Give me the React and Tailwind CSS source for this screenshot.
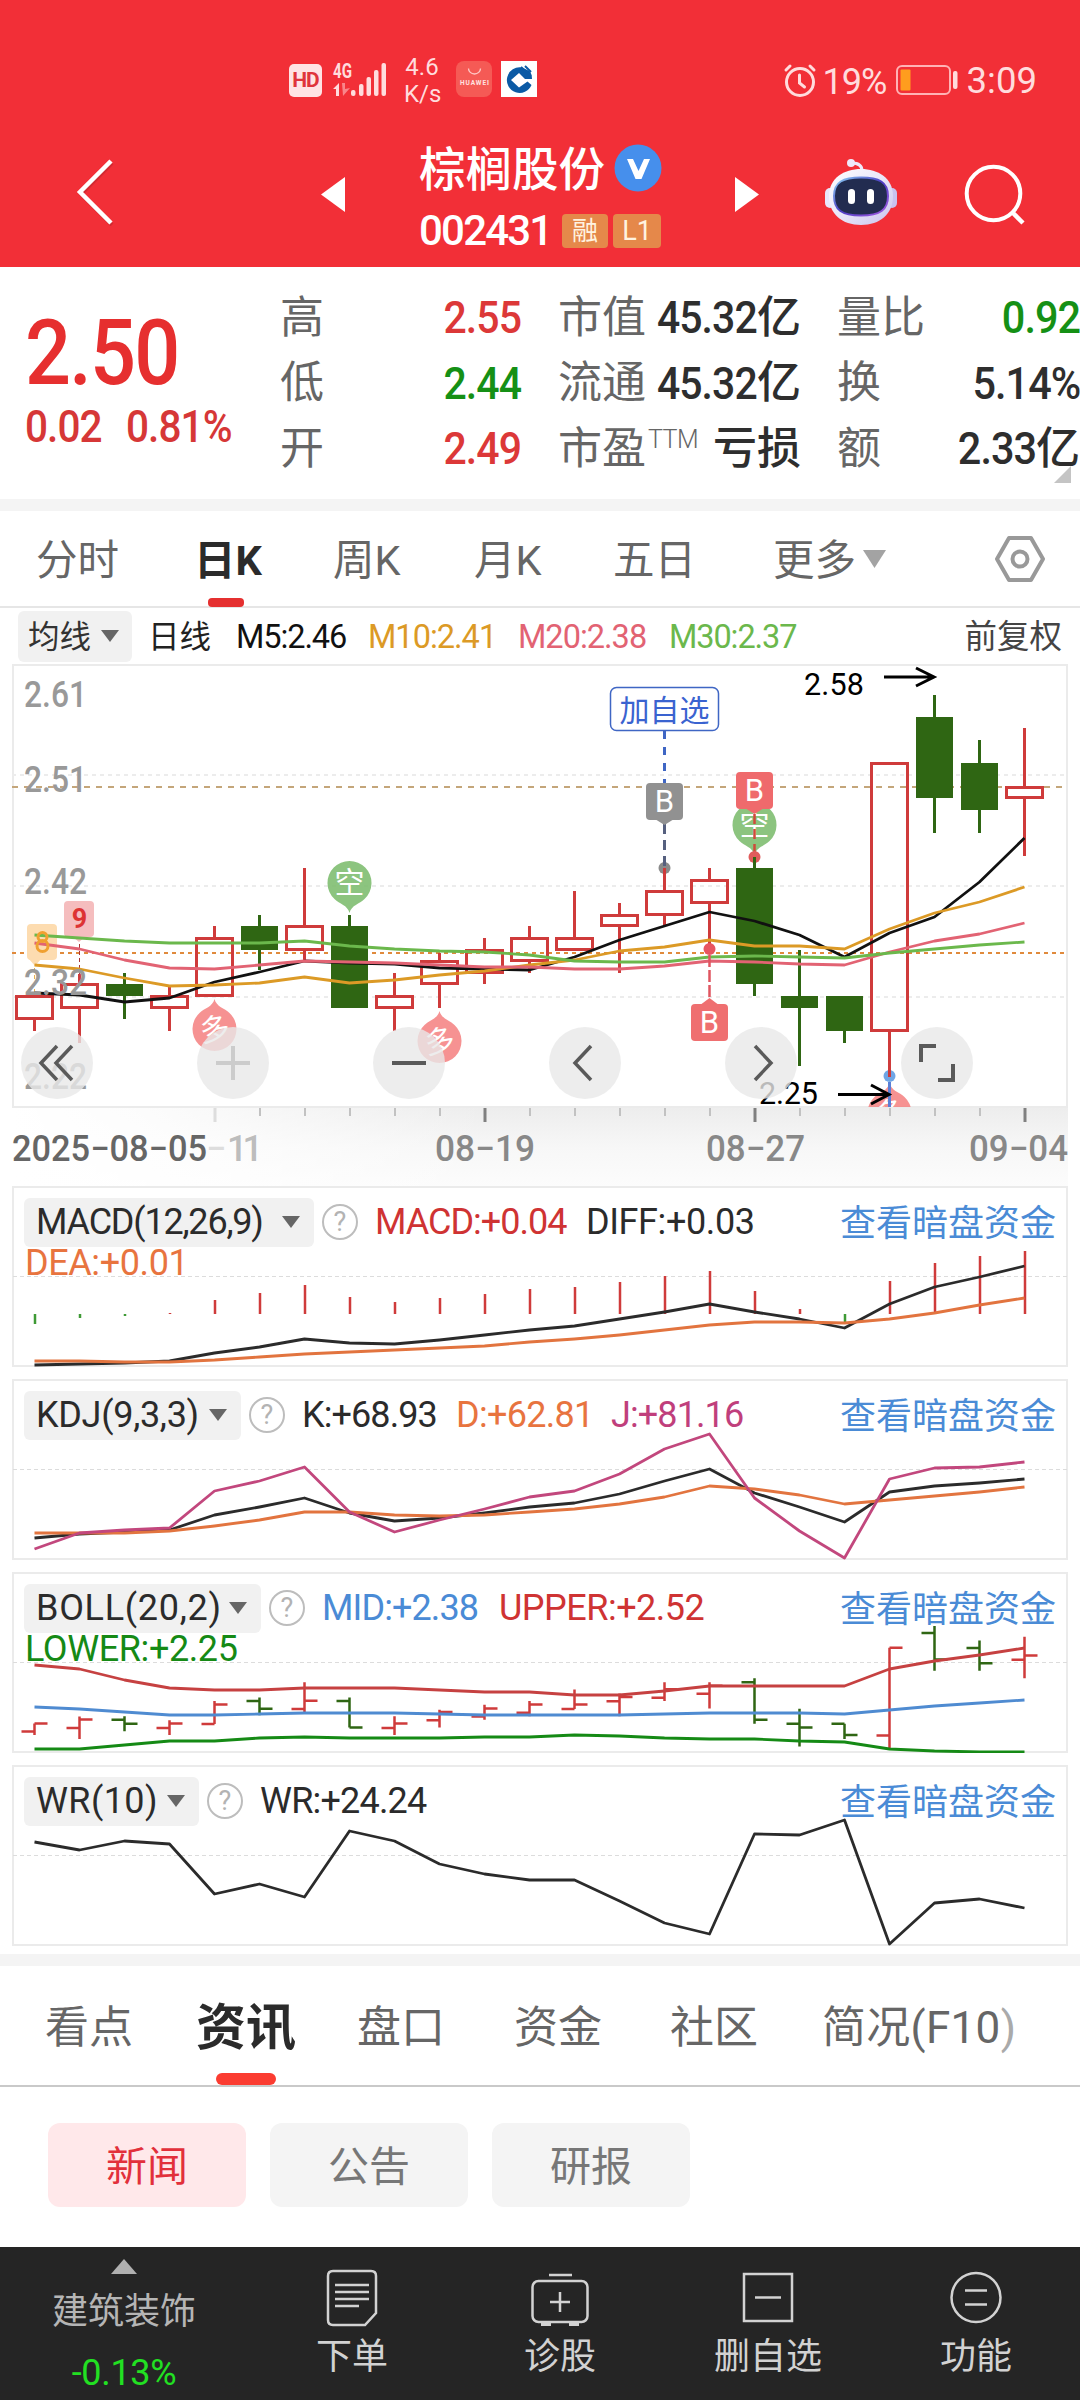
import React from 'react';

const GREEN = '#2f6613';
const RED = '#cf3b3b';

// y positions on the price canvas: type, high, body top, body bottom, low
const candles = [
  ['up', 995, 995, 1020, 1031],
  ['up', 974, 983, 1009, 1043],
  ['down', 973, 984, 996, 1019],
  ['up', 985, 995, 1009, 1031],
  ['up', 926, 937, 997, 997],
  ['down', 915, 926, 950, 970],
  ['up', 868, 925, 951, 960],
  ['down', 915, 926, 1008, 1008],
  ['up', 973, 995, 1009, 1031],
  ['up', 953, 960, 985, 1008],
  ['up', 938, 949, 974, 984],
  ['up', 926, 937, 962, 973],
  ['up', 891, 937, 951, 951],
  ['up', 903, 914, 927, 973],
  ['up', 868, 890, 916, 926],
  ['up', 868, 879, 904, 949],
  ['down', 856, 868, 984, 996],
  ['down', 950, 996, 1008, 1066],
  ['down', 996, 996, 1031, 1043],
  ['up', 762, 762, 1032, 1077],
  ['down', 695, 717, 798, 833],
  ['down', 740, 763, 810, 833],
  ['up', 728, 786, 799, 856],
];

const averages = [
  { color: '#111', ys: [993, 995, 1002, 998, 982, 972, 961, 963, 964, 968, 969, 970, 957, 940, 926, 912, 921, 935, 957, 933, 917, 882, 838] },
  { color: '#dc9a26', ys: [965, 969, 978, 986, 985, 983, 977, 983, 980, 975, 971, 965, 960, 951, 947, 940, 946, 946, 949, 929, 913, 902, 887] },
  { color: '#e26373', ys: [943, 949, 960, 968, 969, 965, 961, 962, 963, 965, 967, 967, 969, 969, 966, 961, 962, 964, 965, 952, 941, 934, 923] },
  { color: '#6bb84c', ys: [935, 938, 941, 943, 943, 943, 941, 946, 949, 951, 952, 955, 961, 962, 962, 957, 956, 957, 958, 953, 949, 945, 942] },
];

const indicators = [
  {
    name: 'MACD(12,26,9)',
    width: 'w-[290px] tracking-[-1.200px]',
    values: [
      { text: 'MACD:+0.04', style: 'w-[211px] text-[#cf3333] tracking-[-1px]' },
      { text: 'DIFF:+0.03', style: 'text-[#2b2b2b] tracking-[-0.4px]' },
    ],
    extra: { text: 'DEA:+0.01', style: 'text-[#e8743f] tracking-[-0.4px]' },
    lines: [
      { color: '#2b2b2b', ys: [178, 177, 176, 174, 166, 160, 152, 156, 157, 153, 148, 143, 139, 132, 125, 117, 125, 132, 141, 117, 100, 90, 79] },
      { color: '#e2743f', ys: [174, 174, 175, 175, 173, 170, 167, 165, 163, 161, 159, 155, 152, 148, 143, 138, 135, 135, 136, 132, 126, 118, 111] },
    ],
    bars: [137, 131, 129, 126, 113, 106, 98, 110, 115, 111, 107, 102, 100, 95, 89, 84, 104, 122, 137, 94, 76, 69, 64],
  },
  {
    name: 'KDJ(9,3,3)',
    width: 'w-[217px] tracking-[-0.300px]',
    values: [
      { text: 'K:+68.93', style: 'w-[154px] text-[#2b2b2b] tracking-[-0.9px]' },
      { text: 'D:+62.81', style: 'w-[155px] text-[#e8743f] tracking-[-0.7px]' },
      { text: 'J:+81.16', style: 'text-[#c03f7c] tracking-[-0.9px]' },
    ],
    lines: [
      { color: '#2b2b2b', ys: [158, 154, 152, 150, 135, 127, 118, 133, 141, 138, 133, 127, 123, 114, 101, 89, 113, 127, 142, 112, 106, 103, 99] },
      { color: '#e2743f', ys: [153, 153, 153, 151, 146, 140, 132, 132, 135, 136, 135, 132, 129, 124, 117, 106, 109, 115, 124, 120, 116, 112, 107] },
      { color: '#c2477d', ys: [169, 153, 150, 148, 111, 101, 87, 132, 152, 140, 129, 117, 111, 94, 69, 54, 118, 151, 178, 99, 88, 87, 82] },
    ],
  },
  {
    name: 'BOLL(20,2)',
    width: 'w-[237px] tracking-[0.700px]',
    values: [
      { text: 'MID:+2.38', style: 'w-[177px] text-[#4a8bd6] tracking-[-0.9px]' },
      { text: 'UPPER:+2.52', style: 'text-[#cf3333] tracking-[-0.5px]' },
    ],
    extra: { text: 'LOWER:+2.25', style: 'text-[#158a15] tracking-[-0.4px]' },
    ohlc: true,
    lines: [
      { color: '#c64141', ys: [92, 96, 107, 115, 117, 117, 115, 115, 115, 117, 119, 119, 122, 122, 118, 113, 113, 113, 113, 96, 88, 82, 75] },
      { color: '#4f8bd1', ys: [134, 136, 139, 142, 142, 141, 140, 140, 140, 141, 142, 142, 142, 142, 141, 140, 140, 140, 141, 137, 133, 130, 127] },
      { color: '#158a15', ys: [176, 176, 172, 168, 168, 165, 164, 165, 165, 165, 164, 164, 162, 163, 165, 166, 166, 168, 169, 176, 178, 179, 179] },
    ],
  },
  {
    name: 'WR(10)',
    width: 'w-[175px] tracking-[0.400px]',
    values: [{ text: 'WR:+24.24', style: 'text-[#2b2b2b] tracking-[-0.8px]' }],
    lines: [
      { color: '#2b2b2b', ys: [76, 84, 75, 78, 128, 118, 131, 65, 75, 98, 108, 114, 114, 135, 157, 168, 68, 69, 54, 178, 137, 133, 142] },
    ],
  },
];

const xAt = (i) => 34.5 + i * 45;
const toPoints = (ys) => ys.map((y, i) => `${xAt(i)},${y}`).join(' ');

const Triangle = ({ className, color = '#666' }) => (
  <svg viewBox="0 0 18 12" preserveAspectRatio="none" className={className}>
    <path d="M0 0h18l-9 12z" fill={color} />
  </svg>
);

const StatusBar = () => (
  <div className="flex h-[66px] items-center pl-[289px] pr-[43px] text-[#ffdcdd]">
    <div className="mt-[2px] flex h-[33px] w-[33px] shrink-0 items-center justify-center rounded-[5px] bg-[#ffe3e4] text-[21px] leading-none font-bold tracking-[-1px] text-[#e0343b]">HD</div>
    <svg viewBox="0 0 56 36" className="ml-[10px] h-[36px] w-[56px] shrink-0 overflow-visible" fill="#ffdcdd">
      <text x="1" y="17" fontSize="20" fontWeight="700" textLength="19" lengthAdjust="spacingAndGlyphs">4G</text>
      <path d="M1 28l6-6v13h-3v-7z" />
      <path d="M10 22h3v6l5-1-7 8z" opacity=".5" />
      <rect x="19" y="29" width="4.5" height="6" rx="2" />
      <rect x="27" y="23" width="4.5" height="12" rx="2" />
      <rect x="34.500" y="16" width="4.5" height="19" rx="2" />
      <rect x="42" y="9" width="4.5" height="26" rx="2" />
      <rect x="49.500" y="2" width="4.5" height="33" rx="2" />
    </svg>
    <div className="mt-[4px] ml-[16px] w-[36px] shrink-0 text-center text-[24px] leading-[27px]">
      <div>4.6</div>
      <div>K/s</div>
    </div>
    <svg viewBox="0 0 36 36" className="ml-[16px] h-[36px] w-[36px] shrink-0">
      <rect width="36" height="36" rx="8" fill="#f55a55" />
      <path d="M12.500 7.500a6 5.500 0 0 0 12 0" fill="none" stroke="#ffc9c6" strokeWidth="1.300" />
      <text x="4" y="24" fontSize="6.500" fontWeight="700" fill="#ffe3e1" textLength="29">HUAWEI</text>
    </svg>
    <svg viewBox="0 0 36 36" className="ml-[9px] h-[36px] w-[36px] shrink-0">
      <rect width="36" height="36" fill="#fff" />
      <path d="M21 6.500a12.800 12.800 0 1 0 9.500 17.500l-4-3.500-8.500 6-8-7.500 8-7 6 6h7c0-4-1-6-2.500-8z" fill="#0b5aa5" />
      <path d="M20 6l10 9M24 5l6 6" stroke="#0b5aa5" strokeWidth="2" />
    </svg>
    <svg viewBox="0 0 34 34" className="mt-[2px] ml-auto h-[34px] w-[34px] shrink-0" fill="none" stroke="#ffdcdd" strokeWidth="3" strokeLinecap="round">
      <circle cx="17" cy="19" r="13.500" />
      <path d="M16.500 12v8l5 4M3 7l4-4M31 7l-4-4" />
    </svg>
    <div className="mt-[5px] ml-[6px] w-[68px] shrink-0 text-[36px] leading-none tracking-[-1px]">19%</div>
    <svg viewBox="0 0 62 30" className="mt-[2px] ml-[5px] h-[30px] w-[62px] shrink-0">
      <rect x="1" y="1" width="53" height="28" rx="5" fill="none" stroke="#ffb3b5" strokeWidth="2" />
      <rect x="4.500" y="4.500" width="10" height="21" rx="1" fill="#ff9d1e" />
      <rect x="57" y="6" width="4.500" height="18" rx="2" fill="#ffdcdd" />
    </svg>
    <div className="mt-[5px] ml-[9px] shrink-0 text-[36.500px] leading-none">3:09</div>
  </div>
);

const Header = () => (
  <header className="h-[267px] bg-[#f22f37] pt-[46px] text-white">
    <StatusBar />
    <div className="flex h-[155px] items-start">
      <svg viewBox="0 0 40 68" className="mt-[46px] ml-[75px] h-[68px] w-[40px]" fill="none">
        <path d="M37 5L6 36l31 31" stroke="#b3242b" strokeWidth="4" opacity=".5" />
        <path d="M36 3L5 34l31 31" stroke="#fff" strokeWidth="4.500" />
      </svg>
      <svg viewBox="0 0 24 35" className="mt-[65px] ml-[206px] h-[35px] w-[24px]">
        <path d="M24 0v35L0 17.500z" fill="#fff" />
      </svg>
      <div className="mt-[32px] ml-[74px] w-[244px]">
        <div className="flex h-[50px] items-center">
          <div className="mt-[2px] text-[46.500px] leading-none font-medium">棕榈股份</div>
          <svg viewBox="0 0 48 48" className="mb-[3px] ml-[9px] h-[48px] w-[48px]">
            <circle cx="24" cy="24" r="23.500" fill="#468fec" />
            <path d="M13 15h6l5.500 12L30 15h6l-8.500 20h-6z" fill="#fff" />
          </svg>
        </div>
        <div className="mt-[20px] flex h-[34px] items-center">
          <div className="w-[143px] text-[42px] leading-none font-medium tracking-[-1.800px]">002431</div>
          <div className="flex h-[34px] w-[46px] items-center justify-center rounded-[4px] bg-[#e5884a] text-[26px] leading-none text-[#fff3e0]">融</div>
          <div className="ml-[5px] flex h-[34px] w-[48px] items-center justify-center rounded-[4px] bg-[#e5884a] text-[27px] leading-none text-[#fff3e0]">L1</div>
        </div>
      </div>
      <svg viewBox="0 0 24 35" className="mt-[65px] ml-[72px] h-[35px] w-[24px]">
        <path d="M0 0v35l24-17.500z" fill="#fff" />
      </svg>
      <svg viewBox="0 0 74 68" className="mt-[46px] ml-[65px] h-[68px] w-[74px]">
        <defs>
          <linearGradient id="shell" x1="0" y1="0" x2="1" y2="1">
            <stop offset="0" stopColor="#ffffff" />
            <stop offset=".5" stopColor="#e9e6f8" />
            <stop offset="1" stopColor="#c9c4ee" />
          </linearGradient>
          <linearGradient id="rim" x1="0" y1="0" x2="1" y2="1">
            <stop offset="0" stopColor="#8ed3f5" />
            <stop offset=".5" stopColor="#4c3dc4" />
            <stop offset="1" stopColor="#a45be0" />
          </linearGradient>
        </defs>
        <path d="M38 13c0-6-4-8-10-8" fill="none" stroke="#efe9fb" strokeWidth="3" />
        <circle cx="27" cy="5" r="4" fill="#efe9fb" />
        <rect x="1" y="30" width="10" height="20" rx="5" fill="#e9e6fa" />
        <rect x="63" y="30" width="10" height="20" rx="5" fill="#c9c2ef" />
        <path d="M37 11C20 11 5 20 5 38s13 29 32 29 32-11 32-29S54 11 37 11z" fill="url(#shell)" />
        <path d="M37 19.500C19 19.500 10 24 10 38s8 19.500 27 19.500S64 52 64 38 55 19.500 37 19.500z" fill="#222c50" stroke="url(#rim)" strokeWidth="2" />
        <rect x="24" y="31" width="7" height="15" rx="3.500" fill="#fff" />
        <rect x="43" y="31" width="7" height="15" rx="3.500" fill="#fff" />
      </svg>
      <svg viewBox="0 0 62 62" className="mt-[52px] ml-[66px] h-[62px] w-[62px]" fill="none" stroke="#fff">
        <circle cx="29.500" cy="29.500" r="26.800" strokeWidth="4" />
        <path d="M48 48l11 11" strokeWidth="4.500" />
      </svg>
    </div>
  </header>
);

const quotes = [
  ['高', '2.55', 'text-[#dc3838]', '市值', '45.32', '亿', '量比', '0.92', '', 'text-[#159015]'],
  ['低', '2.44', 'text-[#159015]', '流通', '45.32', '亿', '换', '5.14%', '', 'text-[#2e2e2e]'],
  ['开', '2.49', 'text-[#dc3838]', '市盈', '', '亏损', '额', '2.33', '亿', 'text-[#2e2e2e]'],
];

const Quote = () => (
  <section className="relative flex h-[232px] bg-white">
    <div className="w-[280px] pt-[41px] pl-[25px]">
      <div className="w-[180px] origin-left scale-x-[.89] text-[91px] leading-none font-medium tracking-[-2px] text-[#e62f2f]">2.50</div>
      <div className="mt-[2px] flex text-[45px] leading-[52px] font-medium tracking-[-1px] text-[#d63737]">
        <div className="w-[101px] origin-left scale-x-[.9]">0.02</div>
        <div className="origin-left scale-x-[.9]">0.81%</div>
      </div>
    </div>
    <div className="flex-1 pt-[18px]">
      {quotes.map(([l1, v1, c1, l2, v2, u2, l3, v3, u3, c3]) => (
        <div key={l1} className="flex h-[65.500px] items-center text-[44px] leading-none whitespace-nowrap text-[#666]">
          <div className="w-[100px]">{l1}</div>
          <div className={`w-[141px] origin-right scale-x-[.91] text-right text-[45px] font-medium tracking-[-1px] ${c1}`}>{v1}</div>
          <div className="ml-[37px] flex w-[96px]">
            {l2}
            {!v2 && <span className="ml-[2px] text-[25px] leading-none font-light tracking-[-0.500px]">TTM</span>}
          </div>
          <div className="flex w-[147px] items-center justify-end text-[#2e2e2e]">
            <span className="origin-right scale-x-[.91] text-[45px] font-medium tracking-[-1px]">{v2}</span>
            <span className="text-[44px] font-medium">{u2}</span>
          </div>
          <div className="ml-[36px] w-[90px]">{l3}</div>
          <div className={`flex flex-1 items-center justify-end font-medium ${c3}`}>
            <span className="origin-right scale-x-[.92] text-[45px] tracking-[-1px]">{v3}</span>
            <span>{u3}</span>
          </div>
        </div>
      ))}
    </div>
    <svg viewBox="0 0 17 17" className="absolute right-[9px] bottom-[16px] h-[17px] w-[17px]">
      <path d="M17 0v17H0z" fill="#c4c4c4" />
    </svg>
  </section>
);

const PeriodTabs = () => (
  <nav className="flex h-[97px] items-center border-b-2 border-[#e6e6e6] bg-white pl-[36px] text-[41.500px] leading-none text-[#666]">
    <div className="w-[158px] pt-[5px]">分时</div>
    <div className="relative flex h-full w-[139px] items-center pt-[5px] font-bold text-[#2b2b2b]">
      日K
      <div className="absolute bottom-[-1px] left-[14px] h-[9px] w-[36px] rounded-[4px] bg-[#e53030]" />
    </div>
    <div className="w-[141px] pt-[5px]">周K</div>
    <div className="w-[139px] pt-[5px]">月K</div>
    <div className="w-[160px] pt-[5px]">五日</div>
    <div className="flex w-[222px] items-center">
      <span className="pt-[5px]">更多</span>
      <Triangle className="ml-[7px] h-[18px] w-[23px]" color="#a3a3a3" />
    </div>
    <svg viewBox="0 0 50 48" className="h-[48px] w-[50px]" fill="none" stroke="#999" strokeWidth="4" strokeLinejoin="round">
      <path d="M14 3h22l12 21-12 21H14L2 24z" />
      <circle cx="25" cy="24" r="7.500" />
    </svg>
  </nav>
);

const AverageRow = () => (
  <div className="flex h-[56px] items-center bg-white pl-[18px] text-[32.500px] leading-none">
    <div className="flex h-[51px] w-[114px] items-center rounded-[6px] bg-[#f1f1f1] pl-[10px] text-[31.500px] text-[#333]">
      <span className="pt-[3px]">均线</span>
      <Triangle className="ml-[10px] h-[12px] w-[18px]" />
    </div>
    <div className="ml-[16px] w-[88px] pt-[3px] text-[31.500px] text-[#222]">日线</div>
    <div className="w-[132px] pt-[2px] tracking-[-1.100px] text-[#111]">M5:2.46</div>
    <div className="w-[150px] pt-[2px] tracking-[-1px] text-[#dc9a26]">M10:2.41</div>
    <div className="w-[151px] pt-[2px] tracking-[-1px] text-[#e26373]">M20:2.38</div>
    <div className="pt-[2px] tracking-[-1.100px] text-[#6bb84c]">M30:2.37</div>
    <div className="mr-[18px] ml-auto pt-[3px] text-[32.500px] text-[#444]">前复权</div>
  </div>
);

const Pin = ({ x, y, label, up }) => (
  <g opacity=".88">
    <path
      d={up
        ? `M${x} ${y - 30}c2 8 10 9 15 14a22 22 0 1 1-30 0c5-5 13-6 15-14z`
        : `M${x} ${y + 31}c-2-8-10-9-15-14a22 22 0 1 1 30 0c-5 5-13 6-15 14z`}
      fill={up ? '#f58484' : '#7dbd6e'}
    />
    <text x={x} y={y + 11} fontSize="30" fill="#fff" textAnchor="middle" transform={up ? `rotate(-10 ${x} ${y})` : undefined}>{label}</text>
  </g>
);

const Badge = ({ x, y, color, up }) => (
  <g>
    <rect x={x - 18.5} y={y} width="37" height="37" rx="4" fill={color} />
    <path d={up ? `M${x - 8} ${y}l8-6 8 6z` : `M${x - 8} ${y + 37}l8 5 8-5z`} fill={color} />
    <text x={x} y={y + 29} fontSize="31" fill="#fff" textAnchor="middle">B</text>
  </g>
);

const Candle = ({ data, x }) => {
  const [type, high, top, bottom, low] = data;
  if (type === 'down') {
    return (
      <g fill={GREEN}>
        <rect x={x - 1.5} y={high} width="3" height={low - high} />
        <rect x={x - 18.5} y={top} width="37" height={bottom - top} />
      </g>
    );
  }
  return (
    <g stroke={RED} strokeWidth="3" fill="none">
      <path d={`M${x} ${high}V${top}M${x} ${bottom}V${low}`} />
      <rect x={x - 18} y={top + 1.5} width="36" height={bottom - top - 3} />
    </g>
  );
};

const CircleButton = ({ children, faded }) => (
  <div className="flex h-[72px] w-[72px] items-center justify-center rounded-full bg-[#e8e8e8]/80">
    <svg viewBox="0 0 40 40" className="h-[40px] w-[40px]" fill="none" stroke={faded ? '#ccc' : '#5a5a5a'} strokeWidth="4">
      {children}
    </svg>
  </div>
);

const PriceChart = () => (
  <section className="relative h-[523px] bg-white">
    <svg viewBox="0 664 1080 523" className="block h-[523px] w-[1080px]">
      <defs>
        <linearGradient id="axisShade" x1="0" y1="0" x2="0" y2="1">
          <stop offset="0" stopColor="#ededed" />
          <stop offset=".5" stopColor="#f7f7f7" />
          <stop offset="1" stopColor="#fcfcfc" />
        </linearGradient>
        <linearGradient id="axisFade" x1="0" y1="0" x2="1" y2="0">
          <stop offset="0" stopColor="#fff" />
          <stop offset=".12" stopColor="#fff" stopOpacity=".85" />
          <stop offset=".45" stopColor="#fff" stopOpacity="0" />
        </linearGradient>
        <clipPath id="plot">
          <rect x="12" y="666" width="1056" height="441" />
        </clipPath>
      </defs>

      <rect x="13" y="1108" width="1055" height="79" fill="url(#axisShade)" />
      <rect x="12" y="1108" width="1056" height="79" fill="url(#axisFade)" />
      <rect x="13" y="665" width="1054" height="442" fill="#fff" stroke="#ebebeb" strokeWidth="2" />

      {[775, 886, 997].map((y) => (
        <path key={y} d={`M12 ${y}h1054`} stroke="#ececec" strokeWidth="2" strokeDasharray="4 4" />
      ))}
      <path d="M12 787h1052" stroke="#c4a67a" strokeWidth="2" strokeDasharray="6 6" />
      <path d="M12 953h1054" stroke="#e08a3c" strokeWidth="2" strokeDasharray="4 4" />

      <rect x="64" y="901" width="30" height="36" rx="4" fill="#f5bdbe" />
      <path d="M73 937l6 5 6-5z" fill="#f5bdbe" />
      <path d="M79.500 944v30" stroke="#a33" strokeWidth="1" strokeDasharray="4 3" />
      <rect x="27" y="924" width="30" height="36" rx="4" fill="#fddcb0" />
      <path d="M29 959l6 7 6-7z" fill="#fddcb0" />
      <path d="M34.500 968v26" stroke="#e5b053" strokeWidth="1" strokeDasharray="4 3" />

      {candles.map((c, i) => (
        <Candle key={i} data={c} x={xAt(i)} />
      ))}
      {averages.map((line) => (
        <polyline key={line.color} points={toPoints(line.ys)} fill="none" stroke={line.color} strokeWidth="2.800" strokeLinejoin="round" />
      ))}
      <text x="79.500" y="928" fontSize="27" fontWeight="700" fill="#d33" textAnchor="middle">9</text>
      <circle cx="42.500" cy="937" r="4.500" fill="none" stroke="#f0a030" strokeWidth="3" />
      <circle cx="42.500" cy="946" r="5.500" fill="none" stroke="#f0a030" strokeWidth="3" />

      <Pin x={349.5} y={882} label="空" />
      <Pin x={754.5} y={824} label="空" />
      <Pin x={214.5} y={1029} label="多" up />
      <Pin x={439.5} y={1041} label="多" up />
      <g clipPath="url(#plot)">
        <Pin x={889.5} y={1113} label="多" up />
        <path d="M889.500 1082v26" stroke="#5b7fd6" strokeWidth="3" />
      </g>

      <rect x="610.500" y="687.500" width="108" height="43" rx="6" fill="#fff" stroke="#3f66c4" strokeWidth="1.500" />
      <text x="664.500" y="721" fontSize="30" fill="#3a63d0" textAnchor="middle">加自选</text>
      <path d="M664.500 731v54" stroke="#3f66c4" strokeWidth="3" strokeDasharray="8 8" />
      <circle cx="664.500" cy="868" r="6" fill="#8a8a8a" />
      <path d="M664.500 868v8" stroke={RED} strokeWidth="3" />
      <path d="M664.500 824v44" stroke="#56607f" strokeWidth="3" strokeDasharray="10 6" />
      <Badge x={664.5} y={783} color="#919191" />

      <path d="M754.500 814v42" stroke="#cf4a3b" strokeWidth="2.500" strokeDasharray="10 5" />
      <circle cx="754.500" cy="857" r="6" fill="#e05c5c" />
      <path d="M754.500 857v11" stroke={GREEN} strokeWidth="3" />
      <Badge x={754.5} y={772} color="#ef6a6c" />

      <circle cx="709.500" cy="949" r="6" fill="#e85560" />
      <path d="M709.500 955v44" stroke="#e05560" strokeWidth="2.500" strokeDasharray="12 3" />
      <Badge x={709.5} y={1004} color="#ef6f70" up />
      <circle cx="889.500" cy="1076" r="6" fill="#6fa6e6" />
      <path d="M889.500 1070v7" stroke={RED} strokeWidth="3" />

      <g fontSize="36.500" fontWeight="500" fill="#999">
        {[[2.61, 707], [2.51, 792], [2.42, 894], [2.32, 995], [2.22, 1089]].map(([v, y]) => (
          <text key={v} x="24" y={y} textLength="63" lengthAdjust="spacingAndGlyphs">{v}</text>
        ))}
      </g>

      <g fontSize="30.500" fill="#000">
        <text x="804" y="695" textLength="60">2.58</text>
        <text x="759" y="1104" textLength="59">2.25</text>
      </g>
      <g stroke="#000" strokeWidth="3" fill="none">
        <path d="M884 677h50M916 668l18 9-18 9" />
        <path d="M838 1094.500h51M871 1085l18 9.500-18 9.500" />
      </g>

      {candles.map((c, i) => {
        if (i < 4) return null;
        const major = i % 6 === 4;
        return (
          <path
            key={i}
            d={`M${xAt(i) + 0.5} 1108v${major ? 14 : 8}`}
            stroke={i === 4 ? '#ddd' : major ? '#808080' : '#c2c2c2'}
            strokeWidth={major ? 3 : 2}
          />
        );
      })}
      <g fontSize="36" fontWeight="500" fill="#888">
        <text x="12" y="1161" fill="#666" textLength="195" lengthAdjust="spacingAndGlyphs">2025−08−05</text>
        <text x="206" y="1161" fill="#ddd">−</text>
        <text x="227" y="1161" fill="#bdbdbd" textLength="36">11</text>
        <text x="435" y="1161" textLength="100" lengthAdjust="spacingAndGlyphs">08−19</text>
        <text x="706" y="1161" textLength="99" lengthAdjust="spacingAndGlyphs">08−27</text>
        <text x="969" y="1161" textLength="99" lengthAdjust="spacingAndGlyphs">09−04</text>
      </g>
    </svg>
    <div className="absolute top-[363px] left-[21px] flex gap-[104px]">
      <CircleButton><path d="M20 3L4 20l16 17M35 3L19 20l16 17" strokeWidth="3.500" /></CircleButton>
      <CircleButton faded><path d="M20 3v34M3 20h34" /></CircleButton>
      <CircleButton><path d="M3 20h34" /></CircleButton>
      <CircleButton><path d="M26 3L10 20l16 17" strokeWidth="3.500" /></CircleButton>
      <CircleButton><path d="M14 3l16 17-16 17" strokeWidth="3.500" /></CircleButton>
      <CircleButton><path d="M4 19V3h15M36 21v16H21" /></CircleButton>
    </div>
  </section>
);

const Indicator = ({ item }) => (
  <section className="relative mx-[12px] h-[181px] border-2 border-[#ebebeb] bg-white">
    <div className="flex h-[48px] translate-y-[10px] items-center pl-[10px] text-[36px] leading-none">
      <div className={`${item.width} flex h-[49px] shrink-0 items-center justify-between rounded-[6px] bg-[#f1f1f1] pr-[14px] pl-[12px] text-[#2b2b2b]`}>
        {item.name}
        <Triangle className="h-[12px] w-[18px]" />
      </div>
      <div className="mr-[17px] ml-[8px] flex h-[36px] w-[36px] shrink-0 items-center justify-center rounded-full border-[2.500px] border-[#bdbdbd] text-[27px] text-[#b3b3b3]">?</div>
      {item.values.map((v) => (
        <div key={v.text} className={`${v.style} shrink-0`}>{v.text}</div>
      ))}
      <div className="mr-[10px] ml-auto pt-[4px] text-[36px] text-[#4a8bd6]">查看暗盘资金</div>
    </div>
    {item.extra && (
      <div className={`${item.extra.style} mt-[9px] pl-[11px] text-[36px] leading-[36px]`}>{item.extra.text}</div>
    )}
    <svg viewBox="12 0 1056 180" className="absolute top-[-1px] left-[-2px] h-[180px] w-[1056px]">
      <path d="M13 89.500h1054" stroke="#dcdcdc" strokeWidth="1" strokeDasharray="4 3" />
      {item.bars && item.bars.map((y, i) => (
        <path key={i} d={`M${xAt(i) + 0.5} 127V${y}`} stroke={y > 127 ? '#3f9a35' : '#cf3b3b'} strokeWidth="2.500" />
      ))}
      {item.ohlc && candles.map(([type, high, top, bottom, low], i) => {
        const y = (v) => v * 0.3247 - 172.7;
        const open = type === 'up' ? bottom : top;
        const close = type === 'up' ? top : bottom;
        return (
          <path
            key={i}
            d={`M${xAt(i)} ${y(high)}V${y(low)}M${xAt(i) - 13} ${y(open)}h13M${xAt(i)} ${y(close)}h13`}
            stroke={type === 'up' ? RED : GREEN}
            strokeWidth="2.500"
          />
        );
      })}
      {item.lines.map((line) => (
        <polyline key={line.color} points={toPoints(line.ys)} fill="none" stroke={line.color} strokeWidth="2.800" strokeLinejoin="round" />
      ))}
    </svg>
  </section>
);

const InfoTabs = () => (
  <nav className="flex h-[121px] items-center border-b-2 border-[#c9c9c9] bg-white pl-[45px] text-[44px] leading-none text-[#666]">
    <div className="w-[151px] pt-[5px]">看点</div>
    <div className="relative flex h-full w-[161px] items-center pt-[5px] text-[50px] font-bold text-[#2b2b2b]">
      资讯
      <div className="absolute bottom-0 left-[20px] h-[12px] w-[60px] rounded-full bg-[#fb3c31]" />
    </div>
    <div className="w-[157px] pt-[5px]">盘口</div>
    <div className="w-[156px] pt-[5px]">资金</div>
    <div className="w-[152px] pt-[5px]">社区</div>
    <div className="pt-[5px] tracking-[0.300px]">简况(F10<span className="text-[#aaa]">)</span></div>
  </nav>
);

const NewsFilter = () => (
  <div className="flex h-[160px] gap-[24px] bg-white pt-[36px] pl-[48px] text-[41px] leading-none text-[#777]">
    <div className="flex h-[84px] w-[198px] items-center justify-center rounded-[12px] bg-[#ffe8ea] pt-[5px] text-[#e2303b]">新闻</div>
    <div className="flex h-[84px] w-[198px] items-center justify-center rounded-[12px] bg-[#f4f4f4] pt-[5px]">公告</div>
    <div className="flex h-[84px] w-[198px] items-center justify-center rounded-[12px] bg-[#f4f4f4] pt-[5px]">研报</div>
  </div>
);

const NavItem = ({ label, children }) => (
  <div className="flex w-[208px] flex-col items-center pt-[20px] text-[36px] leading-none text-[#d2d2d2]">
    <svg viewBox="0 0 60 60" className="h-[60px] w-[60px]" fill="none" stroke="#d2d2d2" strokeWidth="2.500">
      {children}
    </svg>
    <div className="mt-[12px]">{label}</div>
  </div>
);

const BottomBar = () => (
  <footer className="flex h-[153px] bg-[#252525]">
    <div className="flex w-[248px] flex-col items-center pt-[12px] text-[36px] leading-none text-[#b5b5b5]">
      <svg viewBox="0 0 26 15" className="h-[15px] w-[26px]">
        <path d="M13 0l13 15H0z" fill="#b0b0b0" />
      </svg>
      <div className="mt-[20px]">建筑装饰</div>
      <div className="mt-[25px] tracking-[-0.300px] text-[#22e022]">-0.13%</div>
    </div>
    <NavItem label="下单">
      <path d="M11 4h38q5 0 5 5v37l-11 12H11q-5 0-5-5V9q0-5 5-5z" />
      <path d="M13 18h34M13 25h34M13 32h34M13 39h24" />
    </NavItem>
    <NavItem label="诊股">
      <rect x="2.500" y="14" width="55" height="41" rx="6" />
      <path d="M19 8h23M30 25v20M20 35h20" />
      <path d="M11 57h10M39 57h10" strokeWidth="4" />
    </NavItem>
    <NavItem label="删自选">
      <rect x="6" y="7" width="48" height="47" />
      <path d="M17 30.500h26" />
    </NavItem>
    <NavItem label="功能">
      <circle cx="30" cy="30.500" r="24.500" />
      <path d="M19 23.500h22M19 37.500h22" />
    </NavItem>
  </footer>
);

const App = () => {
  return (
    <div className="h-[2400px] w-[1080px] overflow-hidden bg-white font-['Roboto','Noto_Sans_CJK_SC',sans-serif]">
      <Header />
      <Quote />
      <div className="h-[12px] bg-[#f4f4f4]" />
      <PeriodTabs />
      <AverageRow />
      <PriceChart />
      <div className="relative -mt-px flex flex-col gap-[12px]">
        {indicators.map((item) => (
          <Indicator key={item.name} item={item} />
        ))}
      </div>
      <div className="mt-[8px] h-[12px] bg-[#f4f4f4]" />
      <InfoTabs />
      <NewsFilter />
      <BottomBar />
    </div>
  );
};

export default App;
